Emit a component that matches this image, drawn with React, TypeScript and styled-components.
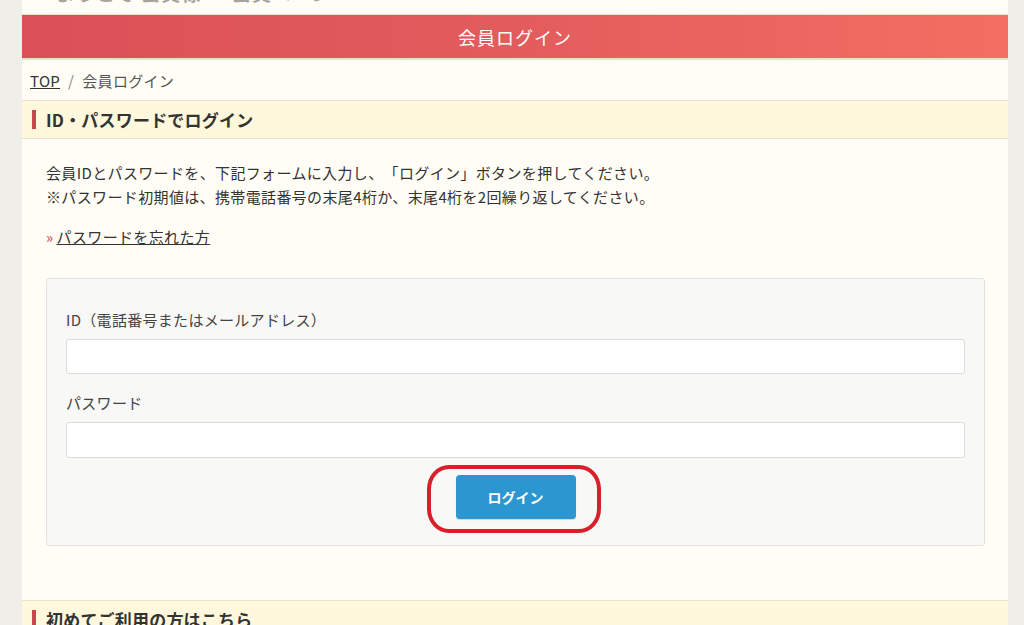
import React from "react";
import styled, { createGlobalStyle } from "styled-components";

const Global = createGlobalStyle`
  html, body { margin: 0; padding: 0; background: #efeee8; }
  body {
    font-family: "Noto Sans CJK JP", "Noto Sans", sans-serif;
    color: #333;
    text-spacing-trim: space-all;
  }
  * { box-sizing: border-box; }
`;

const Page = styled.div`
  width: 1024px;
  height: 625px;
  overflow: hidden;
  background: #efeee8;
  padding-left: 22px;
`;

const Column = styled.div`
  width: 986px;
  min-height: 700px;
  background: #fffdf5;
  display: flex;
  flex-direction: column;
`;

const TopStrip = styled.div`
  height: 15px;
  overflow: hidden;
  border-bottom: 1px solid #f0dcc4;
`;

const TopText = styled.div`
  margin-top: -19px;
  padding-left: 34px;
  font-size: 19px;
  line-height: 24px;
  font-weight: 700;
  color: #a8a39c;
  letter-spacing: 1px;
`;

const Banner = styled.div`
  height: 45px;
  background: linear-gradient(90deg, #db5057 0%, #e35c5d 50%, #f36f62 100%);
  border-bottom: 2px solid #f3dcc8;
  display: flex;
  align-items: center;
  justify-content: center;
  color: #fff;
  font-family: "Liberation Serif", "Noto Sans CJK JP", serif;
  font-size: 18px;
  letter-spacing: 1px;
`;

const Breadcrumb = styled.div`
  height: 41px;
  display: flex;
  align-items: center;
  gap: 8px;
  padding-left: 8px;
  font-size: 15px;
  letter-spacing: 0.3px;
  color: #555;
  border-bottom: 1px solid #eadfcb;
`;

const Crumb = styled.a`
  color: #333;
  text-decoration: underline;
`;

const Sep = styled.span`
  color: #888;
`;

const SectionHead = styled.div<{ top?: boolean }>`
  height: 38px;
  background: #fff8dc;
  border-bottom: 1px solid #ece2c8;
  border-top: ${(p) => (p.top ? "1px solid #ece2c8" : "none")};
  display: flex;
  align-items: center;
  padding-left: 10px;
  gap: 10px;
  font-size: 17px;
  font-weight: 700;
  letter-spacing: 0.2px;
  color: #333;
`;

const Mark = styled.span`
  width: 4px;
  height: 19px;
  background: #c9464d;
`;

const Body = styled.div`
  padding: 22px 23px 54px 24px;
  display: flex;
  flex-direction: column;
`;

const Text = styled.p`
  margin: 0;
  font-size: 15px;
  line-height: 24px;
  letter-spacing: 0.36px;
  color: #333;
`;

const LinkLine = styled.div`
  margin-top: 16px;
  font-size: 15px;
  line-height: 24px;
  letter-spacing: 0.36px;
`;

const Arrow = styled.span`
  color: #d6474f;
  margin-right: 3px;
`;

const Link = styled.a`
  color: #333;
  text-decoration: underline;
`;

const FormBox = styled.div`
  margin-top: 29px;
  width: 939px;
  background: #f8f8f6;
  border: 1px solid #e2e0dc;
  border-radius: 3px;
  padding: 29px 19px 26px 19px;
  display: flex;
  flex-direction: column;
`;

const Label = styled.label<{ first?: boolean }>`
  font-size: 15px;
  line-height: 24px;
  letter-spacing: 0.3px;
  color: #444;
  margin-top: ${(p) => (p.first ? "0" : "17px")};
`;

const Input = styled.input<{ h?: number }>`
  margin-top: 7px;
  height: ${(p) => p.h || 35}px;
  width: 100%;
  background: #fff;
  border: 1px solid #dddcd8;
  border-radius: 3px;
  outline: none;
`;

const ButtonRow = styled.div`
  margin-top: 17px;
  display: flex;
  justify-content: center;
`;

const ButtonWrap = styled.div`
  position: relative;
`;

const Button = styled.button`
  width: 120px;
  height: 44px;
  background: #2b96cf;
  border: none;
  border-radius: 4px;
  color: #fff;
  font-family: "Noto Sans CJK JP", sans-serif;
  font-size: 14px;
  font-weight: 700;
  box-shadow: 0 1px 1px rgba(0, 0, 0, 0.15);
`;

const Ring = styled.div`
  position: absolute;
  left: -29px;
  right: -25px;
  top: -10px;
  bottom: -14px;
  border: 4px solid #d81f2a;
  border-radius: 22px / 24px;
  pointer-events: none;
`;

export default function App() {
  return (
    <>
      <Global />
      <Page>
        <Column>
          <TopStrip>
            <TopText>ようこそ 会員様 ─ 会員ページ</TopText>
          </TopStrip>
          <Banner>会員ログイン</Banner>
          <Breadcrumb>
            <Crumb>TOP</Crumb>
            <Sep>/</Sep>
            <span>会員ログイン</span>
          </Breadcrumb>
          <SectionHead>
            <Mark />
            ID・パスワードでログイン
          </SectionHead>
          <Body>
            <Text>会員IDとパスワードを、下記フォームに入力し、「ログイン」ボタンを押してください。</Text>
            <Text>※パスワード初期値は、携帯電話番号の末尾4桁か、末尾4桁を2回繰り返してください。</Text>
            <LinkLine>
              <Arrow>»</Arrow>
              <Link>パスワードを忘れた方</Link>
            </LinkLine>
            <FormBox>
              <Label first>ID（電話番号またはメールアドレス）</Label>
              <Input h={35} />
              <Label>パスワード</Label>
              <Input h={36} type="password" />
              <ButtonRow>
                <ButtonWrap>
                  <Button>ログイン</Button>
                  <Ring />
                </ButtonWrap>
              </ButtonRow>
            </FormBox>
          </Body>
          <SectionHead top>
            <Mark />
            初めてご利用の方はこちら
          </SectionHead>
        </Column>
      </Page>
    </>
  );
}
